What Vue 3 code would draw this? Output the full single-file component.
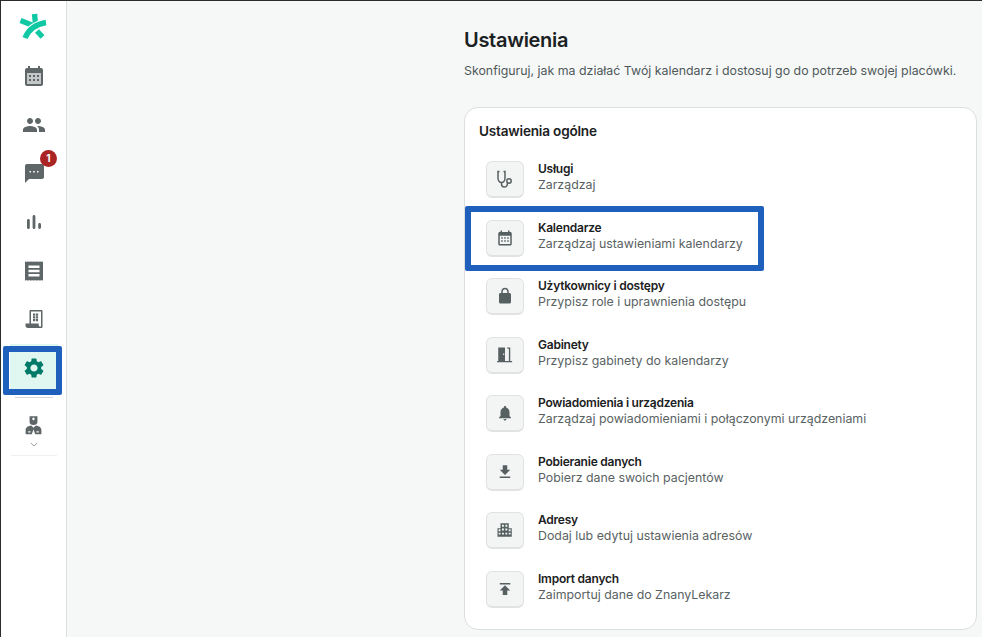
<script setup>
const rail = [
  { id: 'calendar' },
  { id: 'people' },
  { id: 'chat', badge: 1 },
  { id: 'stats' },
  { id: 'receipt' },
  { id: 'book' },
  { id: 'gear', active: true }
]

const rows = [
  { id: 'steth', title: 'Usługi', sub: 'Zarządzaj' },
  { id: 'calendar', title: 'Kalendarze', sub: 'Zarządzaj ustawieniami kalendarzy', marked: true },
  { id: 'lock', title: 'Użytkownicy i dostępy', sub: 'Przypisz role i uprawnienia dostępu' },
  { id: 'door', title: 'Gabinety', sub: 'Przypisz gabinety do kalendarzy' },
  { id: 'bell', title: 'Powiadomienia i urządzenia', sub: 'Zarządzaj powiadomieniami i połączonymi urządzeniami' },
  { id: 'download', title: 'Pobieranie danych', sub: 'Pobierz dane swoich pacjentów' },
  { id: 'building', title: 'Adresy', sub: 'Dodaj lub edytuj ustawienia adresów' },
  { id: 'upload', title: 'Import danych', sub: 'Zaimportuj dane do ZnanyLekarz' }
]

// serrated edge for the receipt
const teeth = (n) => 'l.75-.8l.75 .8'.repeat(n)
const teethBack = (n) => 'l-.75 .8l-.75-.8'.repeat(n)

const fills = {
  people: 'M16 11c1.66 0 3-1.34 3-3s-1.34-3-3-3-3 1.34-3 3 1.34 3 3 3zm-8 0c1.66 0 3-1.34 3-3S9.66 5 8 5 5 6.34 5 8s1.34 3 3 3zm0 2c-2.33 0-7 1.17-7 3.5V19h14v-2.5c0-2.33-4.67-3.5-7-3.5zm8 0c-.29 0-.62.02-.97.05 1.16.84 1.97 1.97 1.97 3.45V19h6v-2.5c0-2.33-4.67-3.5-7-3.5z',
  chat: 'M20 3H5c-1.1 0-2 .9-2 2v17l4-4h13c1.1 0 2-.9 2-2V5c0-1.1-.9-2-2-2zM9 11.5H7.5V10H9v1.5zm3.8 0h-1.6V10h1.6v1.5zm3.7 0H15V10h1.5v1.5z',
  gear: 'M19.14 12.94c.04-.3.06-.61.06-.94 0-.32-.02-.64-.07-.94l2.03-1.58c.18-.14.23-.41.12-.61l-1.92-3.32c-.12-.22-.37-.29-.59-.22l-2.39.96c-.5-.38-1.03-.7-1.62-.94l-.36-2.54c-.04-.24-.24-.41-.48-.41h-3.84c-.24 0-.43.17-.47.41l-.36 2.54c-.59.24-1.13.57-1.62.94l-2.39-.96c-.22-.08-.47 0-.59.22L2.74 8.87c-.12.21-.08.47.12.61l2.03 1.58c-.05.3-.09.63-.09.94s.02.64.07.94l-2.03 1.58c-.18.14-.23.41-.12.61l1.92 3.32c.12.22.37.29.59.22l2.39-.96c.5.38 1.03.7 1.62.94l.36 2.54c.05.24.24.41.48.41h3.84c.24 0 .44-.17.47-.41l.36-2.54c.59-.24 1.13-.56 1.62-.94l2.39.96c.22.08.47 0 .59-.22l1.92-3.32c.12-.22.07-.47-.12-.61l-2.01-1.58zM12 15.6c-1.98 0-3.6-1.62-3.6-3.6s1.62-3.6 3.6-3.6 3.6 1.62 3.6 3.6-1.62 3.6-3.6 3.6z',
  lock: 'M18 8h-1V6c0-2.76-2.24-5-5-5S7 3.24 7 6v2H6c-1.1 0-2 .9-2 2v10c0 1.1.9 2 2 2h12c1.1 0 2-.9 2-2V10c0-1.1-.9-2-2-2zM9 6c0-1.66 1.34-3 3-3s3 1.34 3 3v2H9V6z',
  bell: 'M12 22c1.1 0 2-.9 2-2h-4c0 1.1.89 2 2 2zm6-6v-5c0-3.07-1.64-5.64-4.5-6.32V4c0-.83-.67-1.5-1.5-1.5s-1.5.67-1.5 1.5v.68C7.63 5.36 6 7.92 6 11v5l-2 2v1h16v-1l-2-2z',
  download: 'M19 9h-4V3H9v6H5l7 7 7-7zM5 18v2h14v-2H5z',
  upload: 'M5 4v2h14V4H5zm0 10h4v6h6v-6h4l-7-7-7 7z',
  calendar: 'M19 4h-1V2h-2v2H8V2H6v2H5c-1.1 0-2 .9-2 2v14c0 1.1.9 2 2 2h14c1.1 0 2-.9 2-2V6c0-1.1-.9-2-2-2zm0 16H5V9h14v11zM7 11h2v2H7zm4 0h2v2h-2zm4 0h2v2h-2zm-8 4h2v2H7zm4 0h2v2h-2zm4 0h2v2h-2z',
  stats: 'M5 10.5c0-.8.6-1.5 1.4-1.5s1.4.7 1.4 1.5v7c0 .8-.6 1.5-1.4 1.5S5 18.3 5 17.5zM10.6 6.5c0-.8.6-1.5 1.4-1.5s1.4.7 1.4 1.5v11c0 .8-.6 1.5-1.4 1.5s-1.4-.7-1.4-1.5zM16.2 14.4c0-.8.6-1.4 1.4-1.4s1.4.6 1.4 1.4v3.2c0 .8-.6 1.4-1.4 1.4s-1.4-.6-1.4-1.4z',
  receipt: `M3 3${teeth(12)}V21${teethBack(12)}zM6.5 6.5v2.4h11V6.5zm0 4.3v2.4h11v-2.4zm0 4.3v2.4h11v-2.4z`,
  book: 'M7.5 16.5V4a1 1 0 0 1 1-1H19.5a1 1 0 0 1 1 1V20a1 1 0 0 1-1 1H6c-1.5 0-2.5-1-2.5-2.5V16.5zM9 4.5h10v15h-1.5c-.5-.5-.8-1-.8-1.8V16.5H9zM11 6.5h2.2v2.2H11zm2.9 0h2.2v2.2h-2.2zM11 9.3h2.2v2.2H11zm2.9 0h2.2v2.2h-2.2zM11 12.1h2.2v2.2H11zm2.9 0h2.2v2.2h-2.2z',
  door: 'M3 2h9v18H3zM9.5 10v2H11v-2zM15 2H19v18h-1.8V3.6H15zM1.5 20H21.5v1.6H1.5z',
  building: 'M6 3h11v6.5h4V21H2V9.5h4zM8 5v2.5h2.5V5zm4.5 0v2.5H15V5zM8 10v2.5h2.5V10zm4.5 0v2.5H15V10zM3.5 11v2.5H6V11zM17 11v2.5h2.5V11zM3.5 15.5V18H6v-2.5zM8 15.5V18h2.5v-2.5zm4.5 0V18H15v-2.5zM17 15.5V18h2.5v-2.5z',
  doctor: 'M7.5 1.5h9v6.5c0 2.2-1.700 3.500-4.500 3.500s-4.500-1.300-4.500-3.500zM11.400 2.800v1h-1v1.200h1v1h1.200V5h1V3.800h-1v-1zM3 22v-5c0-3 3-4.500 6.300-5l2.700 2.500 2.700-2.500c3.300.5 6.300 2 6.300 5v5zM12 16.500l-2 5.500h4zM6 18.500V20h2.500v-1.500zM15.500 18.500V20H18v-1.500z'
}
</script>

<template>
  <div class="page">
    <aside class="rail">
      <div class="rail-item logo-item">
        <svg viewBox="21 15 26 26" width="26" height="26" class="logo">
          <path d="M34.500 14L35.500 24" />
          <path d="M20.500 20.500L33 25.500" />
          <path class="logo-gap" d="M46 22.500C37 24 29 28.500 25 38" />
          <path d="M46 22.500C37 24 29 28.500 25 38" />
          <path d="M37 31L42.500 37" />
        </svg>
      </div>
      <div v-for="item in rail" :key="item.id" class="rail-item" :class="{ active: item.active }">
        <svg class="rail-icon" viewBox="0 0 24 24" width="24" height="24">
          <template v-if="item.id === 'calendar'">
            <path d="M5 9h14v11H5z" fill="#c3c7c7" />
            <path :d="fills.calendar" fill-rule="evenodd" />
          </template>
          <path v-else :d="fills[item.id]" fill-rule="evenodd" />
        </svg>
        <span v-if="item.badge" class="badge">{{ item.badge }}</span>
        <span v-if="item.active" class="mark"></span>
      </div>
      <div class="rail-rule"></div>
      <div class="account">
        <svg viewBox="0 0 24 24" width="21" height="21"><path :d="fills.doctor" fill-rule="evenodd" /></svg>
        <svg class="chevron" viewBox="0 0 10 6" width="8" height="5"><path d="M1 1l4 4 4-4" /></svg>
      </div>
      <div class="rail-foot"></div>
    </aside>

    <main class="content">
      <div class="column">
        <h1>Ustawienia</h1>
        <p class="lead">Skonfiguruj, jak ma działać Twój kalendarz i dostosuj go do potrzeb swojej placówki.</p>
        <section class="card">
          <h2>Ustawienia ogólne</h2>
          <div v-for="row in rows" :key="row.id" class="row">
            <span class="tile">
              <svg v-if="row.id === 'steth'" viewBox="0 0 24 24" width="24" height="24" class="steth">
                <path d="M6.5 4.5H5V11c0 2.5 1.6 4.5 3.5 4.500S12 13.500 12 11V4.500h-1.500" />
                <path d="M8.500 15.500V17c0 1.800 1.200 3 2.800 3s2.800-1 3-2.500l.2-1.500" />
                <circle cx="16" cy="14" r="2.200" />
              </svg>
              <svg v-else viewBox="0 0 24 24" width="18" height="18"><path :d="fills[row.id]" fill-rule="evenodd" /></svg>
            </span>
            <span class="copy">
              <span class="title">{{ row.title }}</span>
              <span class="sub">{{ row.sub }}</span>
            </span>
            <span v-if="row.marked" class="mark-row"></span>
          </div>
        </section>
      </div>
    </main>
  </div>
</template>

<style>
html, body { margin: 0; background: #f6f8f8; }
</style>

<style scoped>
.page {
  display: flex;
  height: 637px;
  box-sizing: border-box;
  border-top: 1px solid #2b2b2b;
  border-left: 1px solid #2b2b2b;
  overflow: hidden;
  font-family: Inter, "Noto Sans", sans-serif;
  background: #f6f8f8;
}
.rail {
  width: 66px;
  flex: none;
  box-sizing: border-box;
  background: #fff;
  border-right: 1px solid #dcdfdf;
  padding-top: 3px;
  display: flex;
  flex-direction: column;
  align-items: center;
}
.rail-item {
  position: relative;
  width: 100%;
  height: 48.6px;
  flex: none;
  display: flex;
  align-items: center;
  justify-content: center;
}
.logo-item { height: 48px; }
.logo { fill: none; stroke: #11c8a5; stroke-width: 5.4; overflow: visible; }
.logo .logo-gap { stroke: #fff; stroke-width: 7.6; }
.rail-icon { fill: #5e6667; }
.rail-item.active { background: linear-gradient(#e0f6f1, #e0f6f1) center / 48px 100% no-repeat; }
.rail-item.active .rail-icon { fill: #007a68; }
.badge {
  position: absolute;
  top: 1px;
  left: 39px;
  width: 17px;
  height: 17px;
  border-radius: 50%;
  background: #ab2424;
  color: #fff;
  font-size: 10px;
  font-weight: 700;
  line-height: 17px;
  text-align: center;
}
.mark {
  position: absolute;
  left: 2px;
  top: 2px;
  width: 59px;
  height: 49px;
  box-sizing: border-box;
  border: 6px solid #1f60bd;
  border-radius: 2px;
}
.rail-rule {
  width: 38px;
  height: 1px;
  background: #d5d8d8;
  margin-top: 4.8px;
}
.account {
  display: flex;
  flex-direction: column;
  align-items: center;
  gap: 6px;
  margin-top: 17px;
}
.account svg { fill: #5e6667; }
.account .chevron { fill: none; stroke: #7d8485; stroke-width: 1; }
.rail-foot {
  width: 46px;
  height: 1px;
  background: #eff1f1;
  margin-top: 8px;
}
.content {
  flex: 1;
  padding-left: 397px;
  padding-top: 27px;
}
.column { width: 513px; }
h1 {
  margin: 0;
  font-size: 20px;
  font-weight: 600;
  line-height: 24px;
  letter-spacing: -.3px;
  color: #1b2122;
}
.lead {
  margin: 10px 0 0;
  font-size: 12.37px;
  line-height: 18px;
  color: #4f5859;
  white-space: nowrap;
}
.card {
  margin-top: 27px;
  box-sizing: border-box;
  height: 523px;
  background: #fff;
  border: 1px solid #dcdfdf;
  border-radius: 14px;
  padding: 15px 0 0 21px;
}
h2 {
  margin: 0 0 21px -7px;
  font-size: 13.6px;
  font-weight: 600;
  line-height: 17px;
  letter-spacing: -.2px;
  color: #1b2122;
}
.row {
  position: relative;
  height: 58.5px;
  display: flex;
  gap: 14px;
}
.tile {
  width: 38px;
  height: 37px;
  box-sizing: border-box;
  flex: none;
  display: flex;
  align-items: center;
  justify-content: center;
  background: #f3f4f4;
  border: 1px solid #e1e3e3;
  border-bottom-width: 2px;
  border-radius: 6px;
}
.tile svg { fill: #576061; }
.tile .steth { fill: none; stroke: #576061; stroke-width: 1.5; }
.copy {
  display: flex;
  flex-direction: column;
}
.title {
  font-size: 12px;
  font-weight: 600;
  line-height: 16px;
  letter-spacing: -.23px;
  color: #1b2122;
}
.sub {
  font-size: 12.37px;
  line-height: 16px;
  color: #596263;
}
.mark-row {
  position: absolute;
  left: -21px;
  top: -14px;
  width: 299px;
  height: 65px;
  box-sizing: border-box;
  border: 6px solid #1f60bd;
  border-radius: 2px;
}
</style>
